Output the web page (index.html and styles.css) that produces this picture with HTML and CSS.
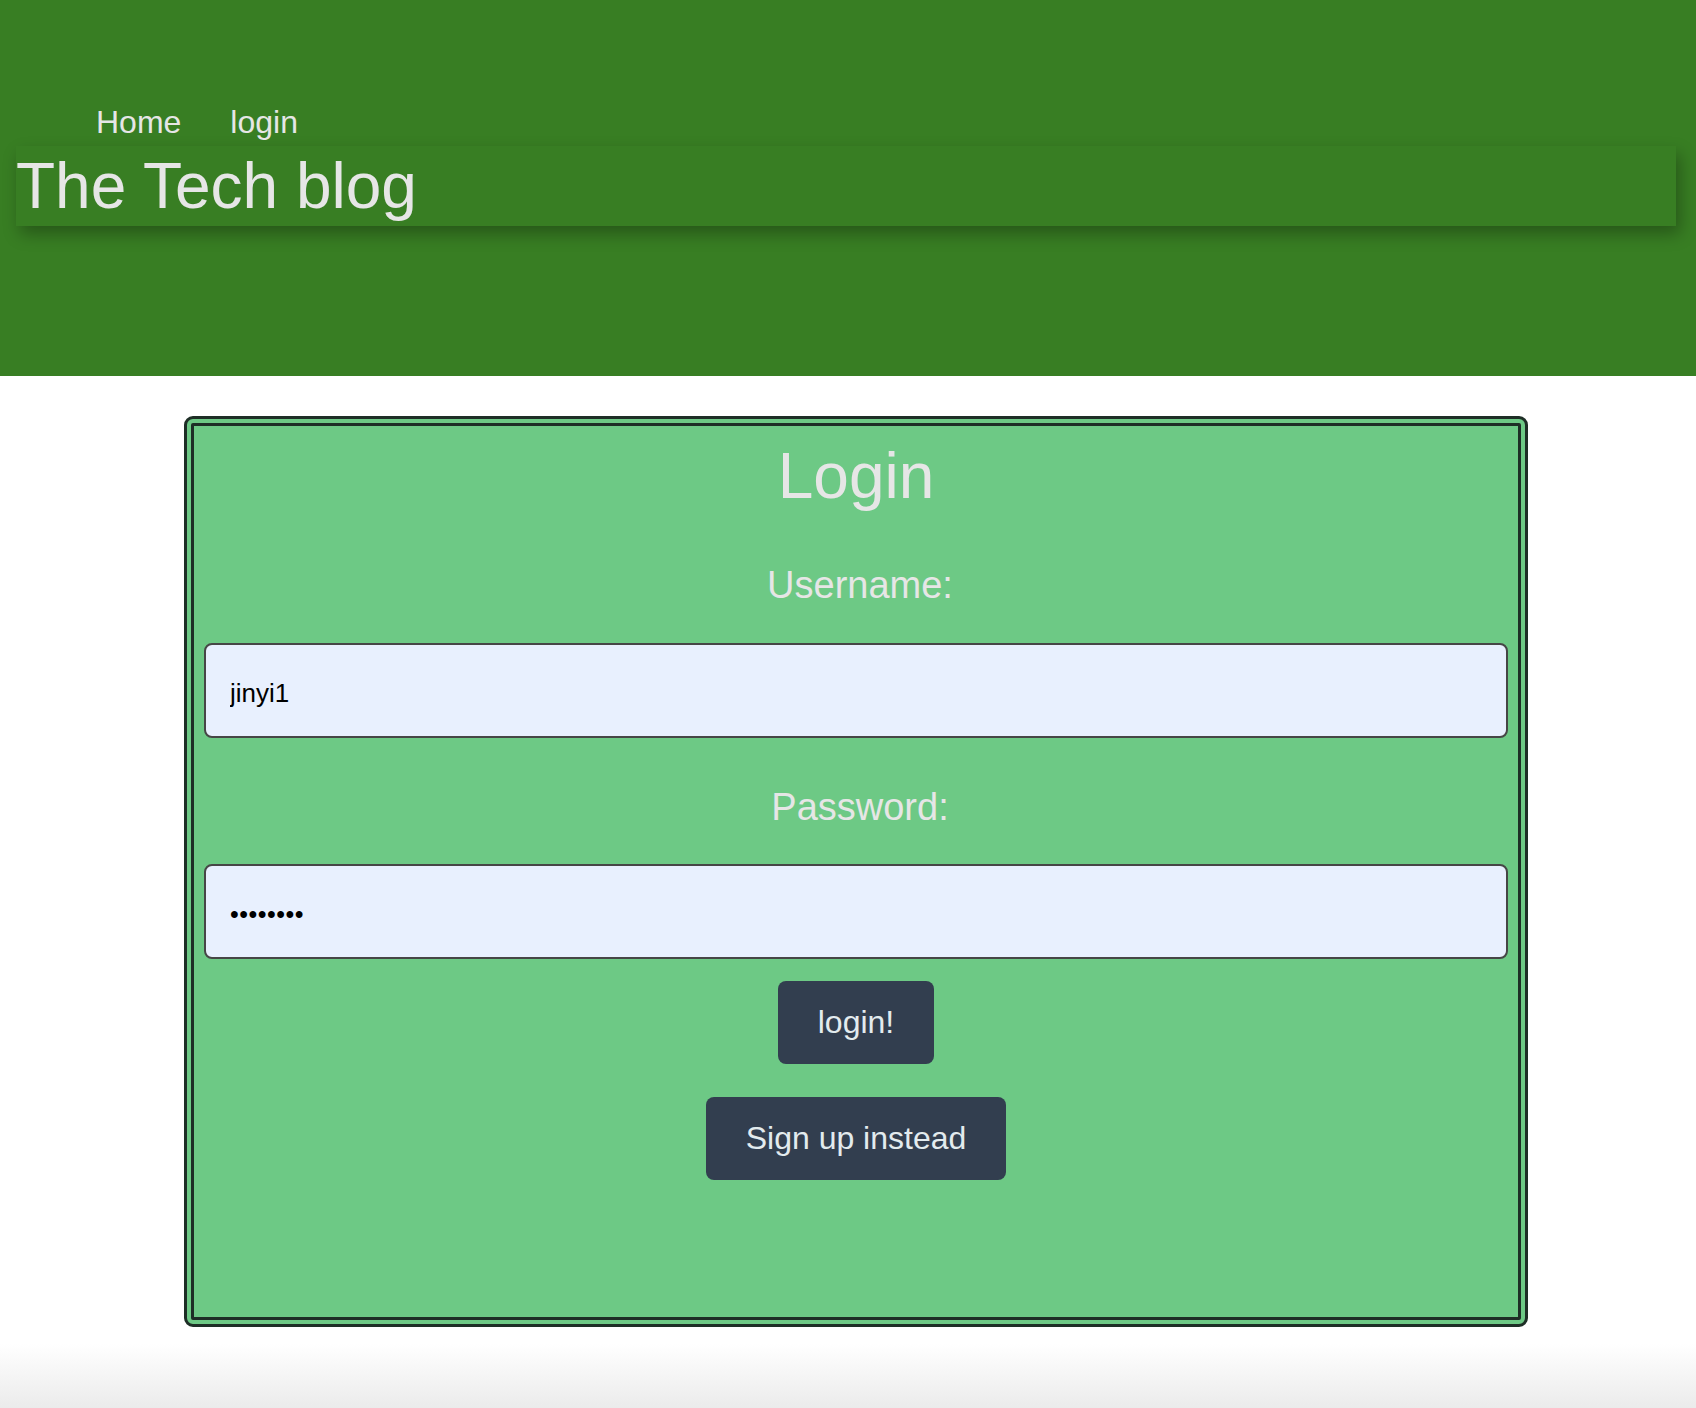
FILE: index.html
```html
<!DOCTYPE html>
<html lang="en">
<head>
<meta charset="utf-8">
<title>The Tech blog</title>
<link rel="stylesheet" href="styles.css">
</head>
<body>
<header class="site-header">
  <nav class="nav">
    <a class="nav-link" href="#">Home</a>
    <a class="nav-link" href="#">login</a>
  </nav>
  <div class="title-bar">
    <h1 class="site-title">The Tech blog</h1>
  </div>
</header>
<main class="main">
  <form class="card">
    <h2 class="card-title">Login</h2>
    <label class="field-label" for="username">Username:</label>
    <input class="field-input" id="username" type="text" value="jinyi1">
    <label class="field-label field-label-pw" for="password">Password:</label>
    <input class="field-input field-input-pw" id="password" type="password" value="password">
    <button class="btn btn-login" type="button">login!</button>
    <button class="btn btn-signup" type="button">Sign up instead</button>
  </form>
</main>
<div class="page-foot"></div>
</body>
</html>
```

FILE: styles.css
```css
html, body {
  margin: 0;
  padding: 0;
  background: #ffffff;
}

body {
  font-family: "Liberation Sans", Arial, sans-serif;
  width: 1696px;
  height: 1408px;
  overflow: hidden;
  display: flex;
  flex-direction: column;
}

.site-header {
  background: #387e23;
  height: 376px;
  box-sizing: border-box;
  padding-top: 104px;
}

.nav {
  display: flex;
  gap: 49px;
  padding-left: 96px;
  height: 36px;
}

.nav-link {
  color: #e6e6e6;
  text-decoration: none;
  font-size: 32px;
  line-height: 36px;
}

.title-bar {
  margin: 6px 20px 0 16px;
  height: 80px;
  background: #387e23;
  box-shadow: 4px 8px 16px rgba(0, 0, 0, 0.3);
}

.site-title {
  margin: 0;
  font-weight: normal;
  font-size: 64px;
  line-height: 80px;
  color: #e6e6e6;
}

.main {
  padding-left: 184px;
  padding-top: 40px;
}

.card {
  box-sizing: border-box;
  width: 1344px;
  height: 911px;
  border: 10px double #1e2e26;
  border-radius: 9px;
  background: #6dc985;
  display: flex;
  flex-direction: column;
  align-items: center;
  padding-top: 15px;
}

.card-title {
  margin: 0;
  font-weight: normal;
  font-size: 64px;
  line-height: 70px;
  color: #e6e6e6;
}

.field-label {
  margin-top: 52px;
  font-size: 38px;
  line-height: 44px;
  color: #e6e6e6;
  padding-left: 8px;
}

.field-label-pw {
  margin-top: 47px;
}

.field-input {
  box-sizing: border-box;
  align-self: stretch;
  margin: 36px 10px 0;
  height: 95px;
  border: 2px solid #464646;
  border-radius: 8px;
  background: #e8f0fe;
  padding: 6px 24px 0;
  font-family: "Liberation Sans", Arial, sans-serif;
  font-size: 26px;
  color: #000000;
  outline: none;
}

.field-input-pw {
  margin-top: 35px;
  font-size: 25px;
  letter-spacing: 0.5px;
}

.btn {
  box-sizing: border-box;
  height: 83px;
  border: none;
  border-radius: 8px;
  background: #323e4f;
  color: #e3ebee;
  font-family: "Liberation Sans", Arial, sans-serif;
  font-size: 32px;
  padding: 0 40px;
  cursor: pointer;
}

.btn-login {
  margin-top: 22px;
}

.btn-signup {
  margin-top: 33px;
  padding: 0 40px;
}

.page-foot {
  margin-top: auto;
  height: 64px;
  background: linear-gradient(to bottom, #ffffff, #ebebeb);
}
```
